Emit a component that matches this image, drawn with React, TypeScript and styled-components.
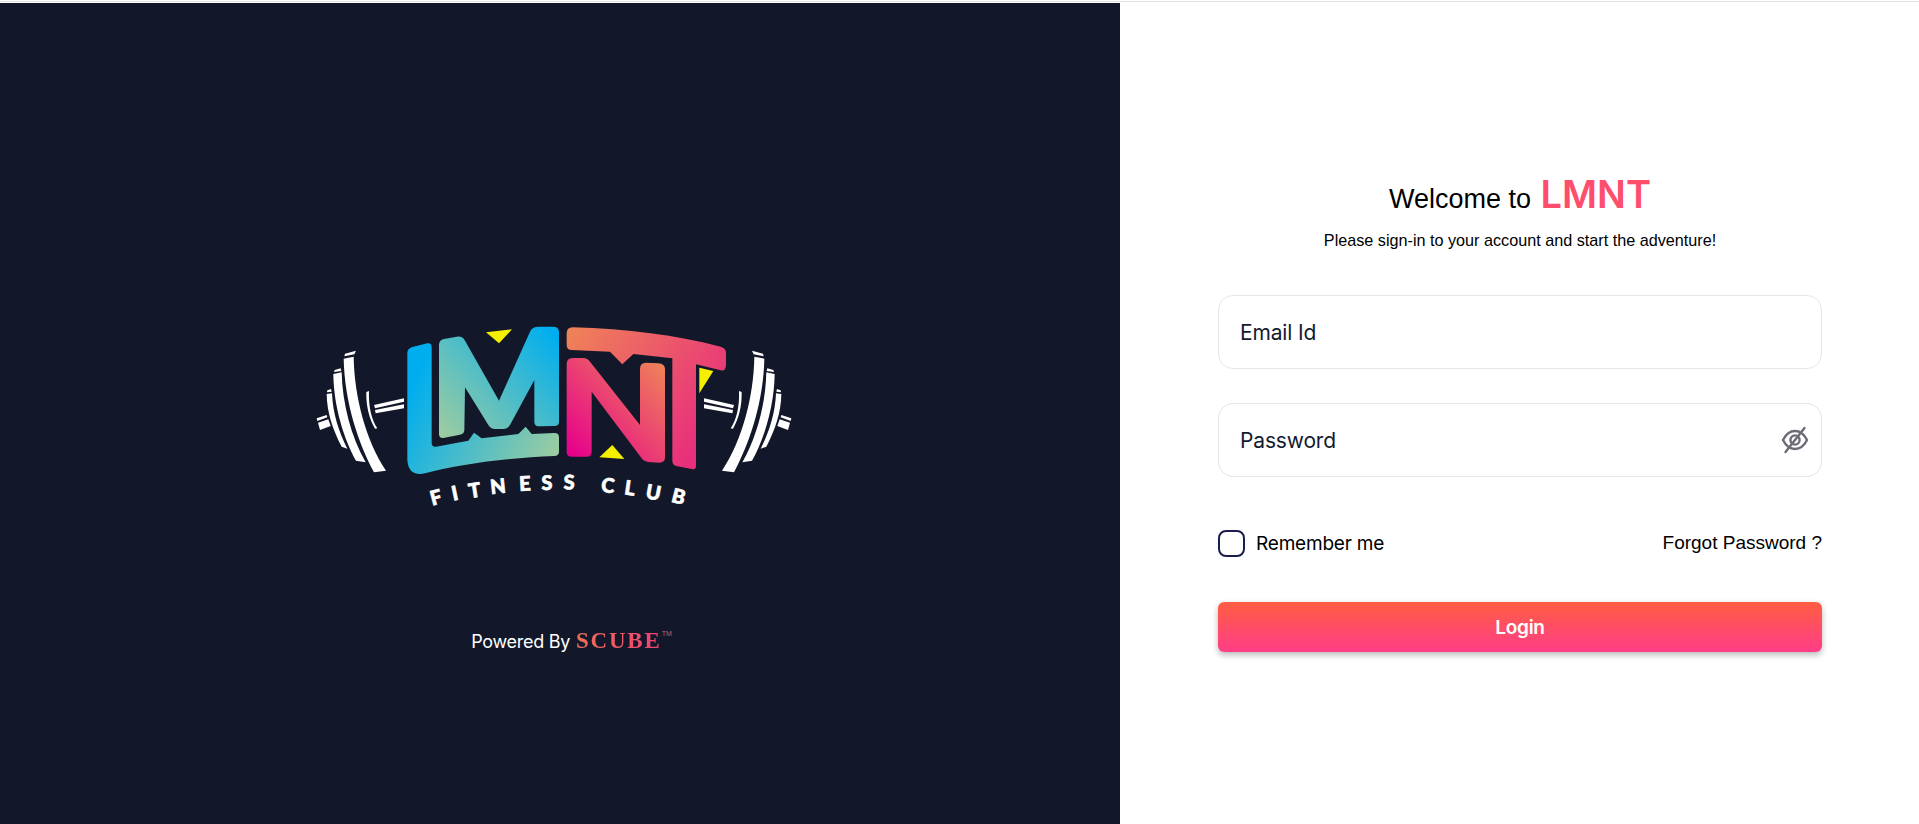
import React from 'react';
import styled, {createGlobalStyle} from 'styled-components';

const GlobalStyle = createGlobalStyle`
    html, body {
        margin: 0;
        padding: 0;
        background: #fff;
        overflow: hidden;
    }
    * {
        box-sizing: border-box;
    }
`;

const Page = styled.div`
    width: 1919px;
    height: 824px;
    display: flex;
    flex-direction: column;
    padding-top: 1px;
    overflow: hidden;
`;

const TopRule = styled.div`
    height: 1px;
    margin-bottom: 1px;
    background: #e3e3e3;
    flex: none;
`;

const Columns = styled.div`
    flex: 1;
    display: flex;
`;

const BrandPanel = styled.section`
    width: 1120px;
    flex: none;
    background: #12182a;
    display: flex;
    flex-direction: column;
    align-items: center;
    padding-top: 307px;
`;

const LogoSvg = styled.svg`
    width: 520px;
    height: 210px;
    flex: none;
    display: block;
`;

const LogoLetter = styled.text`
    font-family: "Lato", "Liberation Sans", sans-serif;
    font-weight: 900;
    font-size: 60px;
    fill: #fff;
    stroke: #fff;
    stroke-width: 2px;
`;

const PoweredRow = styled.div`
    margin: 107px 0 0 23px;
    display: flex;
    align-items: center;
    gap: 6px;
    font-family: "Inter", "Open Sans", sans-serif;
    font-size: 18px;
    letter-spacing: -0.3px;
    color: #fff;
    height: 28px;
`;

const Scube = styled.span`
    font-family: "Liberation Serif", serif;
    font-weight: 700;
    font-size: 23px;
    letter-spacing: 1.8px;
    background: linear-gradient(90deg, #f0705a, #f03f72);
    -webkit-background-clip: text;
    background-clip: text;
    color: transparent;
`;

const Trademark = styled.sup`
    font-family: "Liberation Sans", sans-serif;
    font-size: 7px;
    letter-spacing: 0;
    color: #b9646f;
    margin: -16px 0 0 -6px;
`;

const FormPanel = styled.main`
    flex: 1;
    padding: 0 97px 0 98px;
    display: flex;
    flex-direction: column;
    font-family: "Liberation Sans", Arial, sans-serif;
    color: #000;
`;

const Heading = styled.h1`
    margin: 169px 0 0;
    font-size: 27px;
    font-weight: 400;
    line-height: 44px;
    text-align: center;
`;

const BrandName = styled.span`
    font-family: "Inter", "Liberation Sans", sans-serif;
    font-size: 38px;
    font-weight: 600;
    color: #ff4d6d;
    margin-left: 2px;
`;

const Subtitle = styled.p`
    margin: 9px 0 0;
    font-size: 16.2px;
    line-height: 20px;
    text-align: center;
`;

const FieldBox = styled.label<{$first?: boolean}>`
    height: 74px;
    margin-top: ${({$first}) => ($first ? '45px' : '34px')};
    padding: 0 11px 0 21px;
    display: flex;
    align-items: center;
    border: 1px solid #e4e6ea;
    border-radius: 15px;
    background: #fff;
`;

const FieldInput = styled.input`
    flex: 1;
    min-width: 0;
    border: 0;
    outline: 0;
    padding: 0;
    background: transparent;
    font-family: "Inter", "Open Sans", sans-serif;
    font-size: 21px;
    letter-spacing: -0.15px;
    color: #141a30;

    &::placeholder {
        color: #141a30;
        opacity: 1;
    }
`;

const OptionsRow = styled.div`
    margin-top: 53px;
    height: 26px;
    display: flex;
    align-items: center;
    justify-content: space-between;
`;

const RememberLabel = styled.label`
    display: flex;
    align-items: center;
    gap: 11px;
    font-family: "Inter", "Open Sans", sans-serif;
    font-size: 19px;
    letter-spacing: -0.2px;
`;

const CheckBox = styled.span`
    width: 27px;
    height: 27px;
    border: 2px solid #1a1d4e;
    border-radius: 8px;
    flex: none;
`;

const ForgotLink = styled.a`
    font-size: 19px;
    color: #000;
    text-decoration: none;
`;

const LoginButton = styled.button`
    margin-top: 46px;
    height: 50px;
    width: 100%;
    border: 0;
    border-radius: 6px;
    background: linear-gradient(180deg, #ff5e42, #ff3d87);
    box-shadow: 0 3px 6px rgba(0, 0, 0, 0.28);
    color: #fff;
    font-family: "Inter", "Open Sans", sans-serif;
    font-size: 19px;
    font-weight: 600;
    letter-spacing: -0.3px;
    padding-top: 2px;
`;

const Barbell = ({flip}: {flip?: boolean}) => (
    <g
        fill='#fff'
        transform={flip ? 'translate(1524 0) scale(-1 1)' : undefined}
    >
        <path d='M131 146 L161 140 C163 260 197 390 258 482 L222 487 C176 400 134 280 131 146 Z'/>
        <path d='M133 139 L135 131 L168 122 L163 133 Z'/>
        <path d='M100 192 L125 187 C127 280 153 380 197 457 L168 452 C133 390 101 290 100 192 Z'/>
        <path d='M102 186 L104 180 L122 175 L124 183 Z'/>
        <path d='M80 252 L96 250 C98 310 118 370 142 416 L125 410 C99 360 81 310 80 252 Z'/>
        <path d='M81 247 L82 241 L93 237 L95 245 Z'/>
        <path d='M199 246 L207 243 C205 290 215 330 232 355 L225 356 C208 325 198 290 199 246 Z'/>
        <path d='M222 285 L312 265 L312 275 L225 295 Z'/>
        <path d='M225 300 L312 283 L312 295 L227 310 Z'/>
        <path d='M50 325 L80 315 L82 322 L52 333 Z'/>
        <path d='M54 338 L85 328 L92 348 L60 360 Z'/>
    </g>
);

const logoLetters = [
    {c: 'F', x: 413, y: 583, r: -15},
    {c: 'I', x: 469, y: 570, r: -12},
    {c: 'T', x: 527, y: 562, r: -9},
    {c: 'N', x: 596, y: 550, r: -6},
    {c: 'E', x: 676, y: 542, r: -3},
    {c: 'S', x: 741, y: 540, r: -1},
    {c: 'S', x: 807, y: 538, r: 1},
    {c: 'C', x: 922, y: 548, r: 5},
    {c: 'L', x: 987, y: 555, r: 8},
    {c: 'U', x: 1056, y: 568, r: 11},
    {c: 'B', x: 1131, y: 580, r: 14},
];

// drawn at 3x the on-screen size, coordinates taken off the reference
const Logo = () => (
    <LogoSvg viewBox='0 0 1560 630'>
        <defs>
            <linearGradient id='gradL' gradientUnits='userSpaceOnUse' x1='340' y1='220' x2='770' y2='440'>
                <stop offset='0' stopColor='#00aeef'/>
                <stop offset='1' stopColor='#9dcca0'/>
            </linearGradient>
            <linearGradient id='gradM' gradientUnits='userSpaceOnUse' x1='760' y1='70' x2='430' y2='380'>
                <stop offset='0' stopColor='#00aeef'/>
                <stop offset='1' stopColor='#9dcca0'/>
            </linearGradient>
            <linearGradient id='gradN' gradientUnits='userSpaceOnUse' x1='810' y1='430' x2='1090' y2='165'>
                <stop offset='0' stopColor='#e6008c'/>
                <stop offset='1' stopColor='#ef8258'/>
            </linearGradient>
            <linearGradient id='gradT' gradientUnits='userSpaceOnUse' x1='810' y1='60' x2='1230' y2='360'>
                <stop offset='0' stopColor='#ef8258'/>
                <stop offset='1' stopColor='#e82f7c'/>
            </linearGradient>
        </defs>
        <Barbell/>
        <Barbell flip={true}/>
        <path
            fill='url(#gradL)'
            d='M322 130 Q322 115 337 111 L382 100 Q395 98 395 112 L395 400 Q396 412 408 410 L505 392 L522 368 L545 385 L655 372 L677 350 L695 372 L762 369 Q777 368 777 382 L777 425 Q777 437 763 438 C620 444 480 462 375 490 Q325 500 322 450 Z'
        />
        <path
            fill='url(#gradM)'
            d='M417 105 Q417 90 432 87 L470 80 Q487 77 495 92 L597 272 L690 65 Q697 50 715 50 L760 50 Q777 50 777 67 L777 335 Q777 348 763 348 L718 349 Q703 349 703 335 L703 210 L630 345 Q622 358 608 357 L585 357 Q572 357 565 345 L495 232 L493 360 Q493 372 480 374 L430 384 Q417 385 417 372 Z'
        />
        <path
            fill='url(#gradT)'
            d='M800 70 Q800 52 818 52 C980 56 1130 76 1262 110 Q1278 114 1278 128 L1278 165 Q1278 184 1262 181 L1188 163 L1188 468 Q1188 480 1175 477 L1132 469 Q1117 466 1117 452 L1117 145 L1000 132 L967 163 L930 125 L815 120 Q800 120 800 105 Z'
        />
        <path
            fill='url(#gradN)'
            d='M800 162 Q800 144 818 144 L850 144 Q862 144 870 155 L1020 345 L1020 176 Q1020 158 1038 158 L1075 160 Q1095 161 1095 178 L1095 442 Q1095 458 1078 458 L1045 456 Q1032 455 1025 445 L875 245 L875 425 Q875 440 860 440 L815 440 Q800 440 800 425 Z'
        />
        <path fill='#f4f000' d='M558 67 L636 58 L597 100 Z'/>
        <path fill='#f4f000' d='M898 442 L937 405 L973 447 Z'/>
        <path fill='#f4f000' d='M1198 173 L1240 183 L1198 250 Z'/>
        {logoLetters.map((l) => (
            <LogoLetter
                key={l.x}
                x={l.x}
                y={l.y}
                textAnchor='middle'
                transform={`rotate(${l.r} ${l.x} ${l.y})`}
            >
                {l.c}
            </LogoLetter>
        ))}
    </LogoSvg>
);

const EyeOff = () => (
    <svg width='30' height='28' viewBox='0 0 30 28' fill='none' stroke='#6c6c78' strokeWidth='2.4' strokeLinecap='round'>
        <path d='M3 14 C6 8 10 5 15 5 C20 5 24 8 27 14 C24 20 20 23 15 23 C10 23 6 20 3 14 Z'/>
        <circle cx='15' cy='14' r='4.6'/>
        <path d='M24.5 2 L5.5 26'/>
    </svg>
);

export default function App() {
    return (
        <Page>
            <GlobalStyle/>
            <TopRule/>
            <Columns>
                <BrandPanel>
                    <Logo/>
                    <PoweredRow>
                        Powered By
                        <Scube>SCUBE</Scube>
                        <Trademark>TM</Trademark>
                    </PoweredRow>
                </BrandPanel>
                <FormPanel>
                    <Heading>
                        Welcome to <BrandName>LMNT</BrandName>
                    </Heading>
                    <Subtitle>Please sign-in to your account and start the adventure!</Subtitle>
                    <FieldBox $first={true}>
                        <FieldInput placeholder='Email Id'/>
                    </FieldBox>
                    <FieldBox>
                        <FieldInput placeholder='Password' type='password'/>
                        <EyeOff/>
                    </FieldBox>
                    <OptionsRow>
                        <RememberLabel>
                            <CheckBox/>
                            Remember me
                        </RememberLabel>
                        <ForgotLink>Forgot Password ?</ForgotLink>
                    </OptionsRow>
                    <LoginButton>Login</LoginButton>
                </FormPanel>
            </Columns>
        </Page>
    );
}
